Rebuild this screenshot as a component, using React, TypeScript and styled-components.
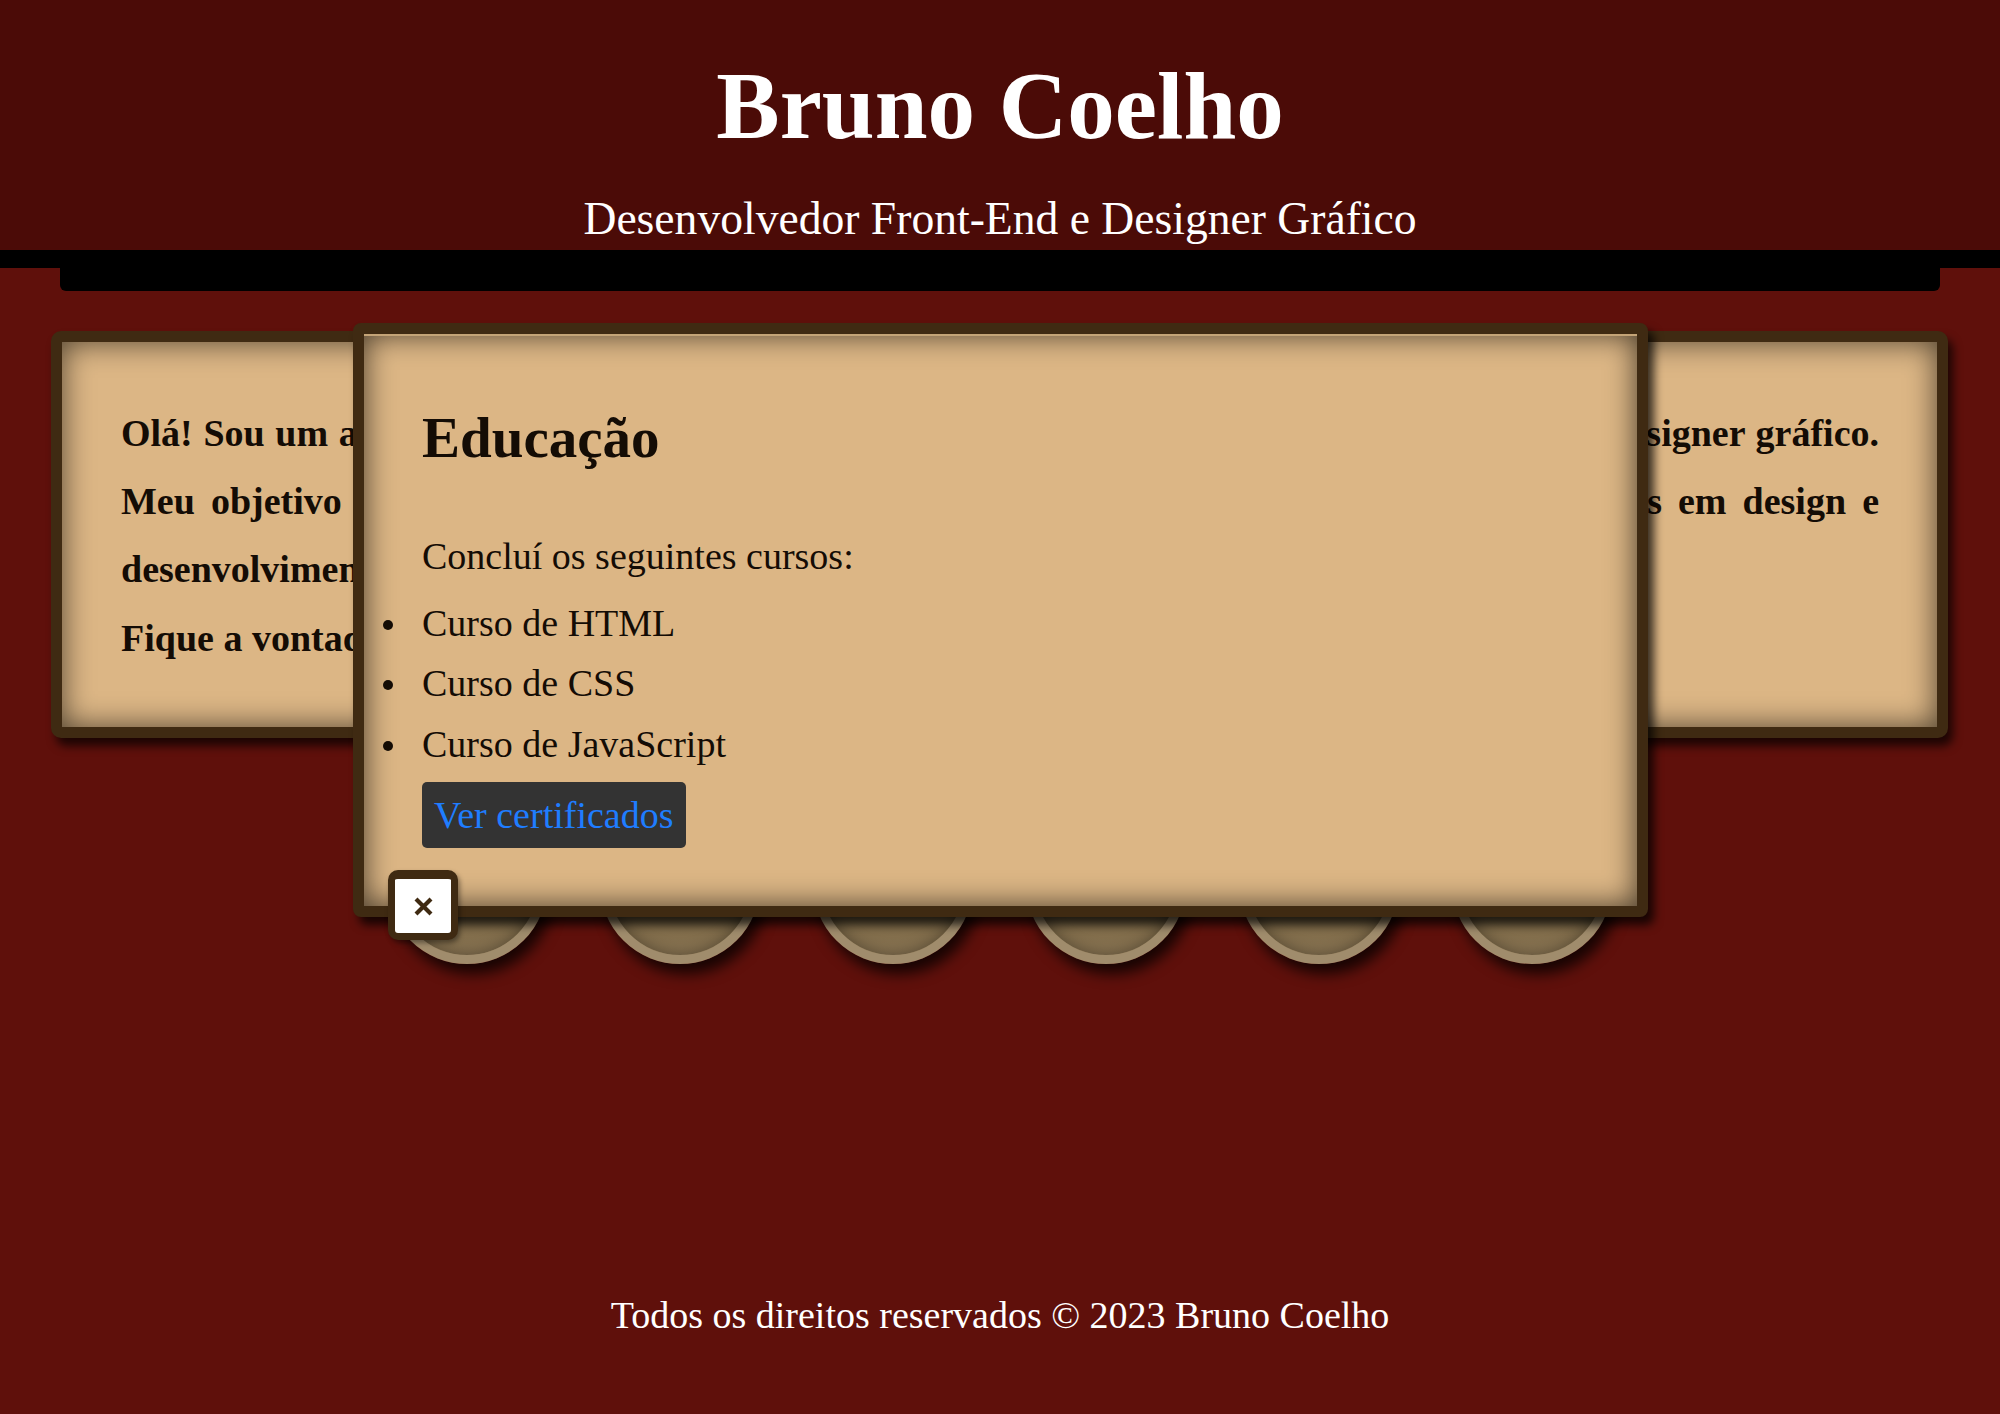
import React from "react";
import styled, { createGlobalStyle } from "styled-components";

const GlobalStyle = createGlobalStyle`
  html, body { margin: 0; padding: 0; }
  body {
    background: #5f100b;
    font-family: "Liberation Serif", "Times New Roman", serif;
    font-size: 38px;
    color: #ffffff;
  }
  *, *::before, *::after { box-sizing: border-box; }
`;

const Page = styled.div`
  min-height: 100vh;
  display: flex;
  flex-direction: column;
`;

const Header = styled.header`
  background: #4b0b07;
  text-align: center;
  color: #ffffff;
  padding: 52px 0 5px;
  border-bottom: 18px solid #000000;
`;

const Title = styled.h1`
  margin: 0;
  font-size: 95px;
  line-height: 109px;
  font-weight: bold;
`;

const Subtitle = styled.p`
  margin: 32px 0 0;
  font-size: 45.6px;
  line-height: 52px;
`;

const NavBar = styled.nav`
  height: 23px;
  margin: 0 60px;
  background: #000000;
  border-radius: 0 0 6px 6px;
`;

const Main = styled.main`
  position: relative;
  padding: 40px 52px 0 51px;
`;

const Panel = styled.section`
  background: #dcb685;
  border: 11px solid #3f2a12;
  color: #140c05;
`;

const AboutCard = styled(Panel)`
  border-radius: 10px;
  padding: 56.5px 58px 54.5px 59px;
  box-shadow: inset 0 0 30px rgba(0, 0, 0, 0.65), 5px 8px 10px rgba(0, 0, 0, 0.7);
  text-align: justify;
  font-weight: bold;
  line-height: 68.4px;
`;

const AboutText = styled.p`
  margin: 0;
`;

const CircleRow = styled.div`
  display: flex;
  justify-content: center;
  gap: 53px;
  margin-top: 66px;
`;

const Circle = styled.div`
  width: 160px;
  height: 160px;
  border-radius: 50%;
  border: 9px solid #a08c6c;
  background: linear-gradient(180deg, #5a4930 0%, #7a6644 70%, #8a7553 100%);
  box-shadow: inset 0 0 16px rgba(0, 0, 0, 0.4), 6px 10px 14px rgba(0, 0, 0, 0.75);
`;

const Modal = styled(Panel)`
  position: absolute;
  top: 32px;
  left: 50%;
  margin-left: -647px;
  width: 1295px;
  z-index: 10;
  border-radius: 8px;
  padding: 71px 57px 58px 58px;
  box-shadow: inset 0 2px 0 #c4a477, inset 0 0 30px rgba(0, 0, 0, 0.7),
    6px 8px 10px rgba(0, 0, 0, 0.75);
`;

const ModalTitle = styled.h2`
  margin: 0;
  font-size: 57px;
  line-height: 65.5px;
  font-weight: bold;
`;

const ModalText = styled.p`
  margin: 63px 0 0;
  line-height: 44px;
`;

const CourseList = styled.ul`
  margin: 15px 0 0;
  padding: 0;
  list-style: none;
`;

const CourseItem = styled.li`
  position: relative;
  line-height: 60.5px;

  &::before {
    content: "";
    position: absolute;
    left: -39px;
    top: 27px;
    width: 10px;
    height: 10px;
    border-radius: 50%;
    background: #140c05;
  }
`;

const CertButton = styled.a`
  display: inline-block;
  margin-top: 8px;
  padding: 10.5px 12px;
  background: #333333;
  color: #1f7dff;
  border-radius: 5px;
  line-height: 45px;
  text-decoration: none;
`;

const CloseButton = styled.button`
  position: absolute;
  left: 24px;
  bottom: -34px;
  width: 70px;
  height: 70px;
  padding: 0;
  border: 7px solid #3f2a12;
  border-top-width: 9px;
  border-radius: 10px;
  background: #ffffff;
  display: flex;
  align-items: center;
  justify-content: center;
  box-shadow: 2px 3px 5px rgba(0, 0, 0, 0.4);
`;

const Footer = styled.footer`
  margin-top: auto;
  padding: 0 0 77px;
  text-align: center;
  color: #ffffff;
  line-height: 44px;
`;

const courses = ["Curso de HTML", "Curso de CSS", "Curso de JavaScript"];

export default function App() {
  return (
    <>
      <GlobalStyle />
      <Page>
        <Header>
          <Title>Bruno Coelho</Title>
          <Subtitle>Desenvolvedor Front-End e Designer Gráfico</Subtitle>
        </Header>
        <NavBar />
        <Main>
          <AboutCard>
            <AboutText>
              Olá! Sou um apaixonado desenvolvedor front-end, produtor de sites responsivos e também designer gráfico.
              Meu objetivo é criar experiências digitais únicas e memoráveis, unindo minhas habilidades em design e
              desenvolvimento web, criando interfaces modernas, funcionais e intuitivas.
              <br />
              Fique a vontade para explorar meu portfólio e entrar em contato.
            </AboutText>
          </AboutCard>
          <CircleRow>
            {Array.from({ length: 6 }).map((_, i) => (
              <Circle key={i} />
            ))}
          </CircleRow>
          <Modal>
            <ModalTitle>Educação</ModalTitle>
            <ModalText>Concluí os seguintes cursos:</ModalText>
            <CourseList>
              {courses.map((c) => (
                <CourseItem key={c}>{c}</CourseItem>
              ))}
            </CourseList>
            <CertButton href="#">Ver certificados</CertButton>
            <CloseButton aria-label="Fechar">
              <svg width="19" height="19" viewBox="0 0 19 19">
                <path d="M2 2 L17 17 M17 2 L2 17" stroke="#3f2a12" strokeWidth="4.2" fill="none" />
              </svg>
            </CloseButton>
          </Modal>
        </Main>
        <Footer>Todos os direitos reservados © 2023 Bruno Coelho</Footer>
      </Page>
    </>
  );
}
